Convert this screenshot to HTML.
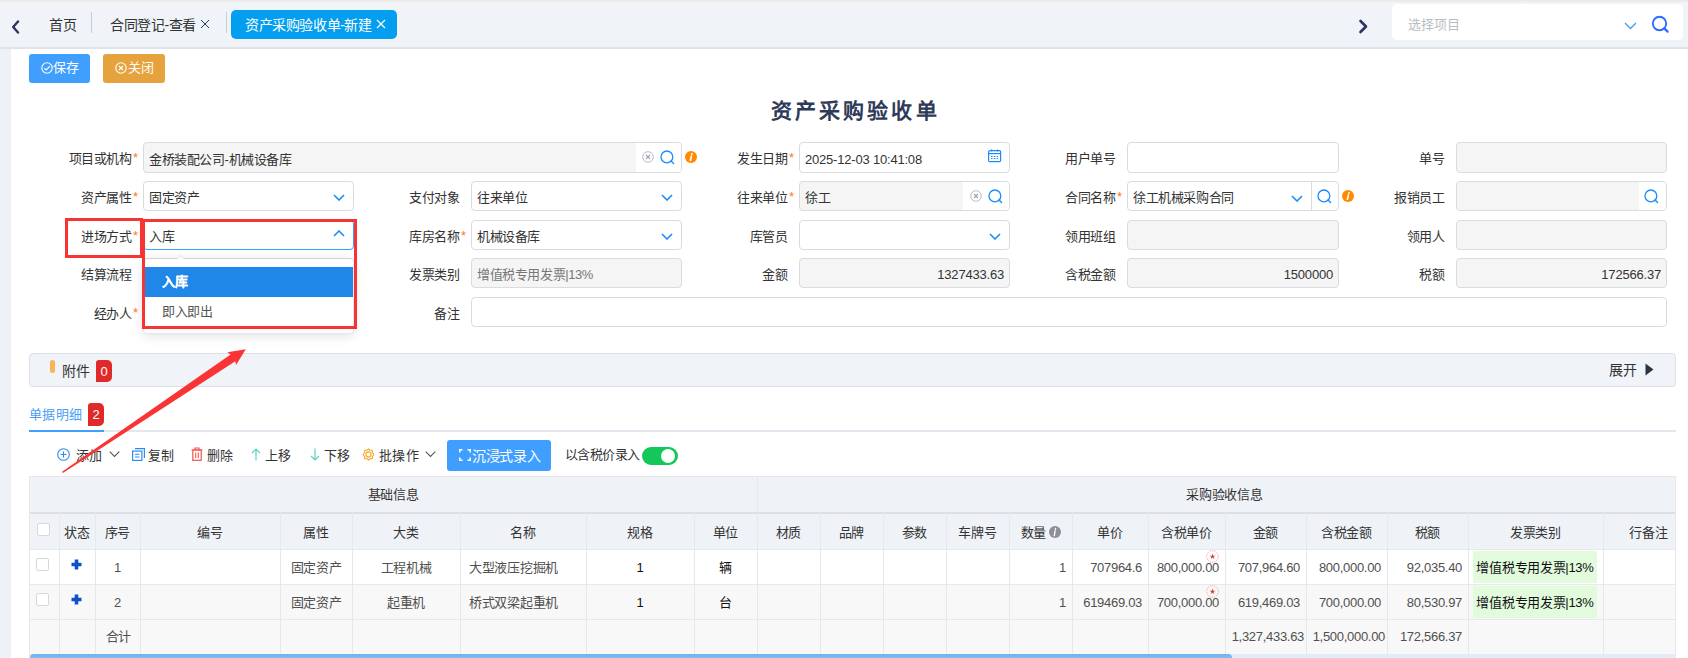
<!DOCTYPE html><html lang="zh-CN"><head><meta charset="utf-8"><style>
*{box-sizing:border-box;margin:0;padding:0}
html,body{width:1688px;height:658px;overflow:hidden;background:#fff}
body{font-family:"Liberation Sans",sans-serif;font-size:13px;color:#333;position:relative}
.abs{position:absolute}
svg{display:block}
#topbar{position:absolute;left:0;top:0;width:1688px;height:49px;background:#f0f3f8;border-bottom:2px solid #dfe4eb}
#topbar .shade{position:absolute;left:0;top:0;width:100%;height:4px;background:linear-gradient(#e7e7e7,#f8f8f8)}
.tabtxt{position:absolute;top:11px;height:29px;line-height:29px;font-size:14px;letter-spacing:-0.4px;color:#333;white-space:nowrap}
.sep{position:absolute;top:12px;width:1px;height:21px;background:#c8ccd3}
#leftstrip{position:absolute;left:0;top:49px;width:11px;height:609px;background:#eef1f6}
.btn{position:absolute;height:29px;line-height:29px;color:#fff;border-radius:3px;font-size:13px}
.lbl{position:absolute;height:30px;line-height:34px;letter-spacing:-0.5px;text-align:right;color:#333;white-space:nowrap}
.req{position:absolute;color:#ff7a1a;font-size:13px;height:30px;line-height:30px;top:-2px}
.inp{position:absolute;height:30px;border:1px solid #d9dbdf;border-radius:4px;background:#fff;line-height:32px;letter-spacing:-0.4px;padding-left:5px;color:#333;white-space:nowrap;overflow:hidden}
.inp.dis{background:#f5f5f5;color:#333}
.inp.r{text-align:right;padding-right:5px;color:#333;letter-spacing:-0.2px}
.ico{position:absolute}
.th,.td{position:absolute;white-space:nowrap;overflow:hidden}
.th{color:#333;text-align:center;line-height:36px}
.td{color:#505050;line-height:35px}
</style></head><body>
<div id="topbar"><div class="shade"></div>
<svg class="abs" style="left:11px;top:20px" width="9" height="14" viewBox="0 0 9 14"><path d="M7 1.5L2.2 7L7 12.5" fill="none" stroke="#2c3560" stroke-width="2.4" stroke-linecap="round" stroke-linejoin="round"/></svg>
<div class="tabtxt" style="left:49px">首页</div>
<div class="sep" style="left:91px"></div>
<div class="tabtxt" style="left:110px">合同登记-查看</div>
<svg class="abs" style="left:200px;top:19px" width="10" height="10" viewBox="0 0 10 10"><path d="M1 1L9 9M9 1L1 9" stroke="#2d3a5a" stroke-width="1"/></svg>
<div class="sep" style="left:226px"></div>
<div class="abs" style="left:231px;top:10px;width:166px;height:29px;background:#039ef0;border-radius:5px"></div>
<div class="tabtxt" style="left:245px;color:#fff">资产采购验收单-新建</div>
<svg class="abs" style="left:376px;top:19px" width="10" height="10" viewBox="0 0 10 10"><path d="M1 1L9 9M9 1L1 9" stroke="#fff" stroke-width="1.1"/></svg>
<svg class="abs" style="left:1358px;top:19px" width="11" height="15" viewBox="0 0 11 15"><path d="M2.5 2L8 7.5L2.5 13" fill="none" stroke="#2c3560" stroke-width="2.6" stroke-linecap="round" stroke-linejoin="round"/></svg>
<div class="abs" style="left:1392px;top:4px;width:291px;height:36px;background:#fff;border-radius:5px"></div>
<div class="abs" style="left:1408px;top:7px;height:36px;line-height:36px;color:#b9bcc3">选择项目</div>
<svg class="abs" style="left:1624px;top:22px" width="13" height="8" viewBox="0 0 13 8"><path d="M1 1L6.5 6.5L12 1" fill="none" stroke="#3a9cf5" stroke-width="1.3"/></svg>
<svg class="abs" style="left:1651px;top:15px" width="19" height="19" viewBox="0 0 19 19"><circle cx="8.5" cy="8.5" r="6.7" fill="none" stroke="#2d6cff" stroke-width="1.9"/><path d="M13.4 13.4L16.6 16.6" stroke="#2d6cff" stroke-width="2.2" stroke-linecap="round"/></svg>
</div>
<div id="leftstrip"></div>

<div class="btn" style="left:29px;top:54px;width:61px;background:#409eff">
<svg class="abs" style="left:12px;top:8px" width="12" height="12" viewBox="0 0 12 12"><circle cx="6" cy="6" r="5.2" fill="none" stroke="#fff" stroke-width="1.1"/><path d="M3.3 6.2L5.2 8L8.7 4.3" fill="none" stroke="#fff" stroke-width="1.2"/></svg>
<span class="abs" style="left:24px;top:-1px">保存</span></div>
<div class="btn" style="left:103px;top:54px;width:62px;background:#e6a23c">
<svg class="abs" style="left:12px;top:8px" width="12" height="12" viewBox="0 0 12 12"><circle cx="6" cy="6" r="5.2" fill="none" stroke="#fff" stroke-width="1.1"/><path d="M4 4L8 8M8 4L4 8" fill="none" stroke="#fff" stroke-width="1.1"/></svg>
<span class="abs" style="left:25px;top:-1px">关闭</span></div>
<div class="abs" style="left:771px;top:96px;font-size:21px;font-weight:bold;letter-spacing:3.1px;color:#2f3a58;line-height:29px;white-space:nowrap">资产采购验收单</div>

<div class="lbl" style="right:1557px;top:142px">项目或机构</div>
<div class="req" style="left:133px;top:143px">*</div>
<div class="inp dis" style="left:143px;top:142px;width:539px;height:31px;line-height:33px">金桥装配公司-机械设备库<div class="abs" style="right:0;top:0;width:45px;height:29px;background:#fff"></div></div>
<svg class="ico" style="left:642px;top:151px" width="12" height="12" viewBox="0 0 12 12"><circle cx="6" cy="6" r="5.3" fill="none" stroke="#b4bac4" stroke-width="1"/><path d="M4 4L8 8M8 4L4 8" stroke="#9aa2ae" stroke-width="1.1"/></svg><svg class="ico" style="left:660px;top:150px" width="15" height="15" viewBox="0 0 15 15"><circle cx="6.9" cy="6.9" r="5.9" fill="none" stroke="#1a8cff" stroke-width="1.3"/><path d="M11 11L13.6 13.6" stroke="#1a8cff" stroke-width="1.4" stroke-linecap="round"/></svg><svg class="ico" style="left:685px;top:151px" width="12" height="12" viewBox="0 0 12 12"><circle cx="6" cy="6" r="6" fill="#ff8a00"/><circle cx="6.9" cy="3" r="0.95" fill="#fff"/><path d="M6.4 5.1L5.4 9.3" stroke="#fff" stroke-width="1.6" stroke-linecap="round"/></svg>
<div class="lbl" style="right:901px;top:142px">发生日期</div>
<div class="req" style="left:789px;top:143px">*</div>
<div class="inp " style="left:799px;top:142px;width:211px;letter-spacing:-0.2px;height:31px;line-height:33px;">2025-12-03 10:41:08</div><svg class="ico" style="left:988px;top:149px" width="14" height="14" viewBox="0 0 14 14"><rect x="0.6" y="1.6" width="12" height="11" rx="1.2" fill="none" stroke="#1a8cff" stroke-width="1.2"/><path d="M0.6 4.6H12.6" stroke="#1a8cff" stroke-width="1.2"/><path d="M3.6 0.5V2.6M9.6 0.5V2.6" stroke="#1a8cff" stroke-width="1.2"/><path d="M3 7.5h1.6M5.8 7.5h1.6M8.6 7.5h1.6M3 9.6h1.6M5.8 9.6h1.6M8.6 9.6h1.6" stroke="#1a8cff" stroke-width="1"/></svg>
<div class="lbl" style="right:573px;top:142px">用户单号</div>
<div class="inp " style="left:1127px;top:142px;width:212px;height:31px;line-height:33px;"></div>
<div class="lbl" style="right:244px;top:142px">单号</div>
<div class="inp dis" style="left:1456px;top:142px;width:211px;height:31px;line-height:33px;"></div>
<div class="lbl" style="right:1557px;top:181px">资产属性</div>
<div class="req" style="left:133px;top:182px">*</div>
<div class="inp " style="left:143px;top:181px;width:211px;">固定资产</div><svg class="ico" style="left:333px;top:194px" width="12" height="7" viewBox="0 0 12 7"><path d="M1 1L6 6L11 1" fill="none" stroke="#1a8cff" stroke-width="1.6"/></svg>
<div class="lbl" style="right:1229px;top:181px">支付对象</div>
<div class="inp " style="left:471px;top:181px;width:211px;">往来单位</div><svg class="ico" style="left:661px;top:194px" width="12" height="7" viewBox="0 0 12 7"><path d="M1 1L6 6L11 1" fill="none" stroke="#1a8cff" stroke-width="1.6"/></svg>
<div class="lbl" style="right:901px;top:181px">往来单位</div>
<div class="req" style="left:789px;top:182px">*</div>
<div class="inp dis" style="left:799px;top:181px;width:211px">徐工<div class="abs" style="right:0;top:0;width:46px;height:28px;background:#fff"></div></div>
<svg class="ico" style="left:970px;top:190px" width="12" height="12" viewBox="0 0 12 12"><circle cx="6" cy="6" r="5.3" fill="none" stroke="#b4bac4" stroke-width="1"/><path d="M4 4L8 8M8 4L4 8" stroke="#9aa2ae" stroke-width="1.1"/></svg><svg class="ico" style="left:988px;top:189px" width="15" height="15" viewBox="0 0 15 15"><circle cx="6.9" cy="6.9" r="5.9" fill="none" stroke="#1a8cff" stroke-width="1.3"/><path d="M11 11L13.6 13.6" stroke="#1a8cff" stroke-width="1.4" stroke-linecap="round"/></svg>
<div class="lbl" style="right:573px;top:181px">合同名称</div>
<div class="req" style="left:1117px;top:182px">*</div>
<div class="inp" style="left:1127px;top:181px;width:212px">徐工机械采购合同<div class="abs" style="left:183px;top:0;width:1px;height:28px;background:#d9dbdf"></div></div>
<svg class="ico" style="left:1291px;top:195px" width="12" height="7" viewBox="0 0 12 7"><path d="M1 1L6 6L11 1" fill="none" stroke="#1a8cff" stroke-width="1.6"/></svg><svg class="ico" style="left:1317px;top:189px" width="15" height="15" viewBox="0 0 15 15"><circle cx="6.9" cy="6.9" r="5.9" fill="none" stroke="#1a8cff" stroke-width="1.3"/><path d="M11 11L13.6 13.6" stroke="#1a8cff" stroke-width="1.4" stroke-linecap="round"/></svg><svg class="ico" style="left:1342px;top:190px" width="12" height="12" viewBox="0 0 12 12"><circle cx="6" cy="6" r="6" fill="#ff8a00"/><circle cx="6.9" cy="3" r="0.95" fill="#fff"/><path d="M6.4 5.1L5.4 9.3" stroke="#fff" stroke-width="1.6" stroke-linecap="round"/></svg>
<div class="lbl" style="right:244px;top:181px">报销员工</div>
<div class="inp dis" style="left:1456px;top:181px;width:211px"><div class="abs" style="right:0;top:0;width:27px;height:28px;background:#fff"></div></div>
<svg class="ico" style="left:1644px;top:189px" width="15" height="15" viewBox="0 0 15 15"><circle cx="6.9" cy="6.9" r="5.9" fill="none" stroke="#1a8cff" stroke-width="1.3"/><path d="M11 11L13.6 13.6" stroke="#1a8cff" stroke-width="1.4" stroke-linecap="round"/></svg>
<div class="lbl" style="right:1557px;top:220px">进场方式</div>
<div class="req" style="left:133px;top:221px">*</div>
<div class="lbl" style="right:1229px;top:220px">库房名称</div>
<div class="req" style="left:461px;top:221px">*</div>
<div class="inp " style="left:471px;top:220px;width:211px;">机械设备库</div><svg class="ico" style="left:661px;top:233px" width="12" height="7" viewBox="0 0 12 7"><path d="M1 1L6 6L11 1" fill="none" stroke="#1a8cff" stroke-width="1.6"/></svg>
<div class="lbl" style="right:901px;top:220px">库管员</div>
<div class="inp " style="left:799px;top:220px;width:211px;"></div><svg class="ico" style="left:989px;top:233px" width="12" height="7" viewBox="0 0 12 7"><path d="M1 1L6 6L11 1" fill="none" stroke="#1a8cff" stroke-width="1.6"/></svg>
<div class="lbl" style="right:573px;top:220px">领用班组</div>
<div class="inp dis" style="left:1127px;top:220px;width:212px;"></div>
<div class="lbl" style="right:244px;top:220px">领用人</div>
<div class="inp dis" style="left:1456px;top:220px;width:211px;"></div>
<div class="lbl" style="right:1557px;top:258px">结算流程</div>
<div class="inp " style="left:143px;top:258px;width:211px;"></div>
<div class="lbl" style="right:1229px;top:258px">发票类别</div>
<div class="inp dis" style="left:471px;top:258px;width:211px;color:#777">增值税专用发票|13%</div>
<div class="lbl" style="right:901px;top:258px">金额</div>
<div class="inp dis r" style="left:799px;top:258px;width:211px;">1327433.63</div>
<div class="lbl" style="right:573px;top:258px">含税金额</div>
<div class="inp dis r" style="left:1127px;top:258px;width:212px;">1500000</div>
<div class="lbl" style="right:244px;top:258px">税额</div>
<div class="inp dis r" style="left:1456px;top:258px;width:211px;">172566.37</div>
<div class="lbl" style="right:1557px;top:297px">经办人</div>
<div class="req" style="left:133px;top:298px">*</div>
<div class="inp " style="left:143px;top:297px;width:211px;"></div>
<div class="lbl" style="right:1229px;top:297px">备注</div>
<div class="inp " style="left:471px;top:297px;width:1196px;"></div>
<div class="inp" style="left:143px;top:220px;width:211px;border-color:#409eff">入库</div>
<svg class="ico" style="left:333px;top:230px" width="12" height="7" viewBox="0 0 12 7"><path d="M1 6L6 1L11 6" fill="none" stroke="#1a8cff" stroke-width="1.6"/></svg>
<div class="abs" style="left:143px;top:258px;width:211px;height:76px;background:#fff;border:1px solid #e4e7ed;border-top-color:#d4d4d4;border-radius:4px;box-shadow:0 2px 12px rgba(0,0,0,.12)"></div>
<div class="abs" style="left:178px;top:256px;width:5px;height:5px;background:#fff;border-left:1px solid #e8e8e8;border-top:1px solid #e8e8e8;transform:rotate(45deg)"></div>
<div class="abs" style="left:144px;top:267px;width:209px;height:30px;background:#1f87e8"></div>
<div class="abs" style="left:162px;top:267px;line-height:30px;color:#fff;font-weight:bold;text-shadow:0.4px 0 0 #fff">入库</div>
<div class="abs" style="left:162px;top:297px;line-height:30px;color:#555;letter-spacing:-0.5px">即入即出</div>

<div class="abs" style="left:65px;top:218px;width:78px;height:40px;border:3px solid #f83333"></div>
<div class="abs" style="left:142px;top:219px;width:215px;height:110px;border:3px solid #f83333"></div>
<div class="abs" style="left:29px;top:353px;width:1647px;height:34px;background:#f0f3f8;border:1px solid #dcdfe6;border-radius:4px"></div>
<div class="abs" style="left:50px;top:360px;width:5px;height:13px;background:#f8b552;border-radius:3px"></div>
<div class="abs" style="left:62px;top:355px;line-height:32px;font-size:14px;color:#333">附件</div>
<div class="abs" style="left:96px;top:360px;width:16px;height:22px;background:#e02a2a;border-radius:3px 5px 5px 0;color:#fff;text-align:center;line-height:23px;font-size:13px">0</div>
<div class="abs" style="left:1609px;top:355px;line-height:30px;font-size:14px;color:#333">展开</div>
<svg class="ico" style="left:1645px;top:363px" width="9" height="13" viewBox="0 0 9 13"><path d="M0.5 0.5L8.5 6.5L0.5 12.5Z" fill="#2b3445"/></svg>
<div class="abs" style="left:29px;top:430px;width:1647px;height:2px;background:#e4e7ed"></div>
<div class="abs" style="left:29px;top:430px;width:75px;height:2px;background:#409eff"></div>
<div class="abs" style="left:29px;top:400px;line-height:30px;font-size:13px;color:#4a9ef5;letter-spacing:0.3px">单据明细</div>
<div class="abs" style="left:88px;top:403px;width:16px;height:23px;background:#e02a2a;border-radius:3px 5px 5px 0;color:#fff;text-align:center;line-height:24px;font-size:13px">2</div>
<svg class="ico" style="left:57px;top:448px" width="13" height="13" viewBox="0 0 13 13"><circle cx="6.5" cy="6.5" r="5.8" fill="none" stroke="#2d8cf0" stroke-width="1.1"/><path d="M6.5 3.5V9.5M3.5 6.5H9.5" stroke="#2d8cf0" stroke-width="1.1"/></svg>
<div class="abs" style="left:76px;top:440px;line-height:31px;font-size:13px;color:#333;letter-spacing:0.3px;">添加</div>
<svg class="ico" style="left:109px;top:451px" width="11" height="7" viewBox="0 0 11 7"><path d="M0.7 0.7L5.5 5.5L10.3 0.7" fill="none" stroke="#555" stroke-width="1.1"/></svg>
<svg class="ico" style="left:132px;top:448px" width="13" height="13" viewBox="0 0 13 13"><rect x="0.6" y="3.1" width="9.3" height="9.3" fill="none" stroke="#2d8cf0" stroke-width="1.2"/><path d="M3 0.6H12.4V10" fill="none" stroke="#2d8cf0" stroke-width="1.2"/><path d="M3 6.3H7.5M3 9H7.5" stroke="#2d8cf0" stroke-width="1.1"/></svg>
<div class="abs" style="left:148px;top:440px;line-height:31px;font-size:13px;color:#333;letter-spacing:0.3px;">复制</div>
<svg class="ico" style="left:191px;top:447px" width="12" height="14" viewBox="0 0 12 14"><path d="M0.5 3H11.5M4 3V1H8V3" fill="none" stroke="#f2564a" stroke-width="1.2"/><rect x="1.8" y="3" width="8.4" height="10.3" fill="none" stroke="#f2564a" stroke-width="1.2"/><path d="M4.7 5.5V11M7.3 5.5V11" stroke="#f2564a" stroke-width="1.1"/></svg>
<div class="abs" style="left:207px;top:440px;line-height:31px;font-size:13px;color:#333;letter-spacing:0.3px;">删除</div>
<svg class="ico" style="left:251px;top:448px" width="10" height="13" viewBox="0 0 10 13"><path d="M5 12.5V1M1 5L5 1L9 5" fill="none" stroke="#5fd3c4" stroke-width="1.2"/></svg>
<div class="abs" style="left:265px;top:440px;line-height:31px;font-size:13px;color:#333;letter-spacing:0.3px;">上移</div>
<svg class="ico" style="left:310px;top:448px" width="10" height="13" viewBox="0 0 10 13"><path d="M5 0.5V12M1 8L5 12L9 8" fill="none" stroke="#5fd3c4" stroke-width="1.2"/></svg>
<div class="abs" style="left:324px;top:440px;line-height:31px;font-size:13px;color:#333;letter-spacing:0.3px;">下移</div>
<svg class="ico" style="left:362px;top:448px" width="13" height="13" viewBox="0 0 13 13"><path d="M6.5 0.8L8 2.3L10.3 2.2L10.4 4.5L12 6.5L10.4 8.5L10.3 10.8L8 10.7L6.5 12.2L5 10.7L2.7 10.8L2.6 8.5L1 6.5L2.6 4.5L2.7 2.2L5 2.3Z" fill="none" stroke="#f5a623" stroke-width="1.1" stroke-linejoin="round"/><circle cx="6.5" cy="6.5" r="2.6" fill="none" stroke="#f5a623" stroke-width="1.1"/></svg>
<div class="abs" style="left:379px;top:440px;line-height:31px;font-size:13px;color:#333;letter-spacing:0.3px;">批操作</div>
<svg class="ico" style="left:425px;top:451px" width="11" height="7" viewBox="0 0 11 7"><path d="M0.7 0.7L5.5 5.5L10.3 0.7" fill="none" stroke="#555" stroke-width="1.1"/></svg>
<div class="abs" style="left:447px;top:440px;width:104px;height:31px;background:#409eff;border-radius:3px"></div>
<svg class="ico" style="left:459px;top:449px" width="12" height="12" viewBox="0 0 12 12"><path d="M0.8 3.5V0.8H3.5M8.5 0.8H11.2V3.5M11.2 8.5V11.2H8.5M3.5 11.2H0.8V8.5" fill="none" stroke="#fff" stroke-width="1.5"/></svg>
<div class="abs" style="left:472px;top:441px;line-height:30px;font-size:14px;color:#fff;letter-spacing:-0.3px">沉浸式录入</div>
<div class="abs" style="left:565px;top:440px;line-height:30px;font-size:13px;color:#333;letter-spacing:-0.6px">以含税价录入</div>
<div class="abs" style="left:642px;top:447px;width:36px;height:18px;background:#13c75b;border-radius:9px"></div>
<div class="abs" style="left:661px;top:449px;width:14px;height:14px;background:#fff;border-radius:7px"></div>
<div class="abs" style="left:29px;top:476px;width:1647px;height:73px;background:#eff2f7"></div>
<div class="abs" style="left:29px;top:549px;width:1647px;height:35px;background:#fff"></div>
<div class="abs" style="left:29px;top:584px;width:1647px;height:70px;background:#f8f8f8"></div>
<div class="abs" style="left:29px;top:476px;width:1647px;height:1px;background:#e6e8ec"></div>
<div class="abs" style="left:29px;top:512px;width:1647px;height:2px;background:#dcdfe4"></div>
<div class="abs" style="left:29px;top:549px;width:1647px;height:1px;background:#e6e8ec"></div>
<div class="abs" style="left:29px;top:584px;width:1647px;height:1px;background:#e6e8ec"></div>
<div class="abs" style="left:29px;top:619px;width:1647px;height:1px;background:#e6e8ec"></div>
<div class="abs" style="left:29px;top:476px;width:1px;height:178px;background:#e6e8ec"></div>
<div class="abs" style="left:1675px;top:476px;width:1px;height:178px;background:#e6e8ec"></div>
<div class="abs" style="left:59px;top:512px;width:1px;height:142px;background:#e6e8ec"></div>
<div class="abs" style="left:95px;top:512px;width:1px;height:142px;background:#e6e8ec"></div>
<div class="abs" style="left:140px;top:512px;width:1px;height:142px;background:#e6e8ec"></div>
<div class="abs" style="left:280px;top:512px;width:1px;height:142px;background:#e6e8ec"></div>
<div class="abs" style="left:352px;top:512px;width:1px;height:142px;background:#e6e8ec"></div>
<div class="abs" style="left:460px;top:512px;width:1px;height:142px;background:#e6e8ec"></div>
<div class="abs" style="left:586px;top:512px;width:1px;height:142px;background:#e6e8ec"></div>
<div class="abs" style="left:694px;top:512px;width:1px;height:142px;background:#e6e8ec"></div>
<div class="abs" style="left:757px;top:512px;width:1px;height:142px;background:#e6e8ec"></div>
<div class="abs" style="left:820px;top:512px;width:1px;height:142px;background:#e6e8ec"></div>
<div class="abs" style="left:883px;top:512px;width:1px;height:142px;background:#e6e8ec"></div>
<div class="abs" style="left:946px;top:512px;width:1px;height:142px;background:#e6e8ec"></div>
<div class="abs" style="left:1009px;top:512px;width:1px;height:142px;background:#e6e8ec"></div>
<div class="abs" style="left:1072px;top:512px;width:1px;height:142px;background:#e6e8ec"></div>
<div class="abs" style="left:1148px;top:512px;width:1px;height:142px;background:#e6e8ec"></div>
<div class="abs" style="left:1225px;top:512px;width:1px;height:142px;background:#e6e8ec"></div>
<div class="abs" style="left:1306px;top:512px;width:1px;height:142px;background:#e6e8ec"></div>
<div class="abs" style="left:1387px;top:512px;width:1px;height:142px;background:#e6e8ec"></div>
<div class="abs" style="left:1468px;top:512px;width:1px;height:142px;background:#e6e8ec"></div>
<div class="abs" style="left:1603px;top:512px;width:1px;height:142px;background:#e6e8ec"></div>
<div class="abs" style="left:757px;top:476px;width:1px;height:36px;background:#e6e8ec"></div>
<div class="th" style="left:29px;top:476px;width:728px;line-height:38px;letter-spacing:-0.3px">基础信息</div>
<div class="th" style="left:757px;top:476px;width:919px;line-height:38px;letter-spacing:-0.3px;padding-left:16px">采购验收信息</div>
<div class="th" style="left:59px;top:512px;width:36px;height:37px;line-height:41px;letter-spacing:-0.3px;">状态</div>
<div class="th" style="left:95px;top:512px;width:45px;height:37px;line-height:41px;letter-spacing:-0.3px;">序号</div>
<div class="th" style="left:140px;top:512px;width:140px;height:37px;line-height:41px;letter-spacing:-0.3px;">编号</div>
<div class="th" style="left:280px;top:512px;width:72px;height:37px;line-height:41px;letter-spacing:-0.3px;">属性</div>
<div class="th" style="left:352px;top:512px;width:108px;height:37px;line-height:41px;letter-spacing:-0.3px;">大类</div>
<div class="th" style="left:460px;top:512px;width:126px;height:37px;line-height:41px;letter-spacing:-0.3px;">名称</div>
<div class="th" style="left:586px;top:512px;width:108px;height:37px;line-height:41px;letter-spacing:-0.3px;">规格</div>
<div class="th" style="left:694px;top:512px;width:63px;height:37px;line-height:41px;letter-spacing:-0.3px;">单位</div>
<div class="th" style="left:757px;top:512px;width:63px;height:37px;line-height:41px;letter-spacing:-0.3px;">材质</div>
<div class="th" style="left:820px;top:512px;width:63px;height:37px;line-height:41px;letter-spacing:-0.3px;">品牌</div>
<div class="th" style="left:883px;top:512px;width:63px;height:37px;line-height:41px;letter-spacing:-0.3px;">参数</div>
<div class="th" style="left:946px;top:512px;width:63px;height:37px;line-height:41px;letter-spacing:-0.3px;">车牌号</div>
<div class="th" style="left:1009px;top:512px;width:63px;height:37px;line-height:41px;letter-spacing:-0.3px;padding-right:14px;">数量</div>
<div class="th" style="left:1072px;top:512px;width:76px;height:37px;line-height:41px;letter-spacing:-0.3px;">单价</div>
<div class="th" style="left:1148px;top:512px;width:77px;height:37px;line-height:41px;letter-spacing:-0.3px;">含税单价</div>
<div class="th" style="left:1225px;top:512px;width:81px;height:37px;line-height:41px;letter-spacing:-0.3px;">金额</div>
<div class="th" style="left:1306px;top:512px;width:81px;height:37px;line-height:41px;letter-spacing:-0.3px;">含税金额</div>
<div class="th" style="left:1387px;top:512px;width:81px;height:37px;line-height:41px;letter-spacing:-0.3px;">税额</div>
<div class="th" style="left:1468px;top:512px;width:135px;height:37px;line-height:41px;letter-spacing:-0.3px;">发票类别</div>
<div class="th" style="left:1603px;top:512px;width:73px;height:37px;line-height:41px;letter-spacing:-0.3px;padding-left:18px;">行备注</div>
<svg class="ico" style="left:1049px;top:526px" width="12" height="12" viewBox="0 0 12 12"><circle cx="6" cy="6" r="6" fill="#8a8f98"/><path d="M6.6 2.4L6.4 3.3M6.1 4.9L5.3 9.6" stroke="#fff" stroke-width="1.4" stroke-linecap="round"/></svg>
<div class="abs" style="left:37px;top:523px;width:13px;height:13px;border:1px solid #d5d8de;border-radius:2px;background:#fff"></div>
<div class="abs" style="left:36px;top:558px;width:13px;height:13px;border:1px solid #d5d8de;border-radius:2px;background:#fff"></div>
<svg class="ico" style="left:71px;top:559px" width="11" height="11" viewBox="0 0 11 11"><path d="M5.5 0.5V10.5M0.5 5.5H10.5" stroke="#0b52c8" stroke-width="3.6"/></svg>
<div class="td" style="left:95px;top:549px;width:45px;height:35px;line-height:38px;text-align:center;color:#505050;letter-spacing:-0.3px;">1</div>
<div class="td" style="left:280px;top:549px;width:72px;height:35px;line-height:38px;text-align:center;color:#505050;letter-spacing:-0.3px;">固定资产</div>
<div class="td" style="left:352px;top:549px;width:108px;height:35px;line-height:38px;text-align:center;color:#505050;letter-spacing:-0.3px;">工程机械</div>
<div class="td" style="left:460px;top:549px;width:126px;height:35px;line-height:38px;text-align:left;color:#505050;letter-spacing:-0.3px;padding-left:9px;">大型液压挖掘机</div>
<div class="td" style="left:586px;top:549px;width:108px;height:35px;line-height:38px;text-align:center;color:#111;letter-spacing:-0.3px;">1</div>
<div class="td" style="left:694px;top:549px;width:63px;height:35px;line-height:38px;text-align:center;color:#111;letter-spacing:-0.3px;">辆</div>
<div class="td" style="left:1009px;top:549px;width:63px;height:35px;line-height:38px;text-align:right;color:#505050;letter-spacing:-0.3px;padding-right:6px;">1</div>
<div class="td" style="left:1072px;top:549px;width:76px;height:35px;line-height:38px;text-align:right;color:#505050;letter-spacing:-0.3px;padding-right:6px;">707964.6</div>
<div class="td" style="left:1148px;top:549px;width:77px;height:35px;line-height:38px;text-align:right;color:#505050;letter-spacing:-0.3px;padding-right:6px;">800,000.00</div>
<div class="td" style="left:1225px;top:549px;width:81px;height:35px;line-height:38px;text-align:right;color:#505050;letter-spacing:-0.3px;padding-right:6px;">707,964.60</div>
<div class="td" style="left:1306px;top:549px;width:81px;height:35px;line-height:38px;text-align:right;color:#505050;letter-spacing:-0.3px;padding-right:6px;">800,000.00</div>
<div class="td" style="left:1387px;top:549px;width:81px;height:35px;line-height:38px;text-align:right;color:#505050;letter-spacing:-0.3px;padding-right:6px;">92,035.40</div>
<div class="abs" style="left:1473px;top:551px;width:124px;height:32px;background:#e1fbdc"></div>
<div class="td" style="left:1473px;top:549px;width:124px;height:35px;line-height:38px;text-align:center;color:#111;letter-spacing:-0.3px">增值税专用发票|13%</div>
<svg class="ico" style="left:1206px;top:550px" width="13" height="13" viewBox="0 0 13 13"><circle cx="6.5" cy="6.5" r="5.8" fill="none" stroke="#f4a3a3" stroke-width="0.9" stroke-dasharray="1.2 0.8"/><path d="M6.5 3.6L7.2 5.7L9.3 5.7L7.6 6.9L8.3 8.9L6.5 7.7L4.7 8.9L5.4 6.9L3.7 5.7L5.8 5.7Z" fill="#e53935"/></svg>
<div class="abs" style="left:36px;top:593px;width:13px;height:13px;border:1px solid #d5d8de;border-radius:2px;background:#fff"></div>
<svg class="ico" style="left:71px;top:594px" width="11" height="11" viewBox="0 0 11 11"><path d="M5.5 0.5V10.5M0.5 5.5H10.5" stroke="#0b52c8" stroke-width="3.6"/></svg>
<div class="td" style="left:95px;top:584px;width:45px;height:35px;line-height:38px;text-align:center;color:#505050;letter-spacing:-0.3px;">2</div>
<div class="td" style="left:280px;top:584px;width:72px;height:35px;line-height:38px;text-align:center;color:#505050;letter-spacing:-0.3px;">固定资产</div>
<div class="td" style="left:352px;top:584px;width:108px;height:35px;line-height:38px;text-align:center;color:#505050;letter-spacing:-0.3px;">起重机</div>
<div class="td" style="left:460px;top:584px;width:126px;height:35px;line-height:38px;text-align:left;color:#505050;letter-spacing:-0.3px;padding-left:9px;">桥式双梁起重机</div>
<div class="td" style="left:586px;top:584px;width:108px;height:35px;line-height:38px;text-align:center;color:#111;letter-spacing:-0.3px;">1</div>
<div class="td" style="left:694px;top:584px;width:63px;height:35px;line-height:38px;text-align:center;color:#111;letter-spacing:-0.3px;">台</div>
<div class="td" style="left:1009px;top:584px;width:63px;height:35px;line-height:38px;text-align:right;color:#505050;letter-spacing:-0.3px;padding-right:6px;">1</div>
<div class="td" style="left:1072px;top:584px;width:76px;height:35px;line-height:38px;text-align:right;color:#505050;letter-spacing:-0.3px;padding-right:6px;">619469.03</div>
<div class="td" style="left:1148px;top:584px;width:77px;height:35px;line-height:38px;text-align:right;color:#505050;letter-spacing:-0.3px;padding-right:6px;">700,000.00</div>
<div class="td" style="left:1225px;top:584px;width:81px;height:35px;line-height:38px;text-align:right;color:#505050;letter-spacing:-0.3px;padding-right:6px;">619,469.03</div>
<div class="td" style="left:1306px;top:584px;width:81px;height:35px;line-height:38px;text-align:right;color:#505050;letter-spacing:-0.3px;padding-right:6px;">700,000.00</div>
<div class="td" style="left:1387px;top:584px;width:81px;height:35px;line-height:38px;text-align:right;color:#505050;letter-spacing:-0.3px;padding-right:6px;">80,530.97</div>
<div class="abs" style="left:1473px;top:586px;width:124px;height:32px;background:#e1fbdc"></div>
<div class="td" style="left:1473px;top:584px;width:124px;height:35px;line-height:38px;text-align:center;color:#111;letter-spacing:-0.3px">增值税专用发票|13%</div>
<svg class="ico" style="left:1206px;top:585px" width="13" height="13" viewBox="0 0 13 13"><circle cx="6.5" cy="6.5" r="5.8" fill="none" stroke="#f4a3a3" stroke-width="0.9" stroke-dasharray="1.2 0.8"/><path d="M6.5 3.6L7.2 5.7L9.3 5.7L7.6 6.9L8.3 8.9L6.5 7.7L4.7 8.9L5.4 6.9L3.7 5.7L5.8 5.7Z" fill="#e53935"/></svg>
<div class="td" style="left:95px;top:619px;width:45px;height:35px;line-height:36px;text-align:center;color:#505050;letter-spacing:-0.3px;padding-left:2px;">合计</div>
<div class="td" style="left:1225px;top:619px;width:81px;height:35px;line-height:36px;text-align:right;color:#505050;letter-spacing:-0.3px;padding-right:6px;padding-right:2px;">1,327,433.63</div>
<div class="td" style="left:1306px;top:619px;width:81px;height:35px;line-height:36px;text-align:right;color:#505050;letter-spacing:-0.3px;padding-right:6px;padding-right:2px;">1,500,000.00</div>
<div class="td" style="left:1387px;top:619px;width:81px;height:35px;line-height:36px;text-align:right;color:#505050;letter-spacing:-0.3px;padding-right:6px;">172,566.37</div>
<div class="abs" style="left:29px;top:654px;width:1647px;height:4px;background:#e3ecf6"></div>
<div class="abs" style="left:30px;top:654px;width:1202px;height:8px;background:linear-gradient(#6fb2ec,#8ec6f3);border-radius:4px"></div>
<svg class="abs" style="left:0;top:0" width="1688" height="658" viewBox="0 0 1688 658"><path d="M62.1 471.7L230.6 354.4L227.4 352.3L245.8 349.2L236 365.1L235.3 361.3L62.9 472.9Z" fill="#fa3434"/></svg>
</body></html>
